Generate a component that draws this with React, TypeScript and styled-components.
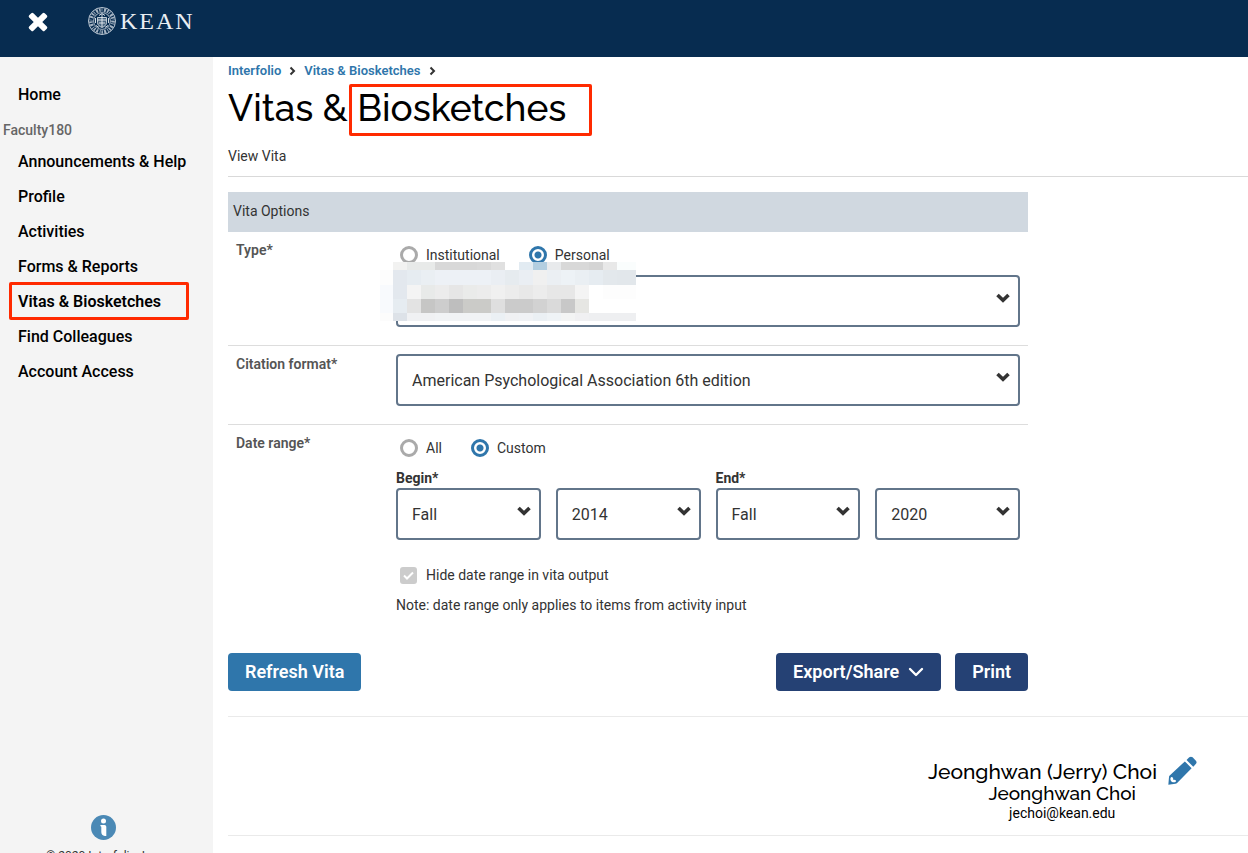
import React from 'react';
import styled, { createGlobalStyle, css } from 'styled-components';

const body = "Roboto, 'Liberation Sans', sans-serif";
const display = "Raleway, Lato, 'Open Sans', sans-serif";

const GlobalStyle = createGlobalStyle`
  *, *::before, *::after { box-sizing: border-box; }
  body {
    margin: 0;
    background: #fff;
    color: #333;
    font: 14px/20px ${body};
    overflow-x: hidden;
  }
  h1, h2, h3, p, ul { margin: 0; padding: 0; font-weight: 400; }
  ul { list-style: none; }
  a { text-decoration: none; }
  fieldset { border: 0; margin: 0; padding: 0; min-width: 0; }
`;

const Shell = styled.div`
  display: flex;
  flex-direction: column;
  height: 100vh;
  overflow: hidden;
`;

const TopBar = styled.header`
  flex: none;
  display: flex;
  align-items: flex-start;
  gap: 40px;
  padding: 6px 28px;
  height: 57px;
  background: #072c50;
  color: #fff;
`;

const IconButton = styled.button`
  display: flex;
  align-self: flex-start;
  padding: 0;
  border: 0;
  background: none;
  color: inherit;
  cursor: pointer;
`;

const CloseButton = styled(IconButton)`
  padding: 6px 0;
`;

const Logo = styled.a`
  display: flex;
  align-items: center;
  gap: 4px;
  color: #e9eef3;
  font: 24px/30px 'Liberation Serif', serif;
  letter-spacing: 2px;
`;

const Body = styled.div`
  flex: 1;
  display: flex;
  min-height: 0;
`;

const Sidebar = styled.nav`
  flex: none;
  width: 213px;
  padding-top: 20px;
  background: #f4f4f4;
  overflow: hidden;
`;

const NavLink = styled.a`
  position: relative;
  display: block;
  padding: 0 18px;
  color: #000;
  font-size: 16px;
  font-weight: 500;
  line-height: 35px;
`;

const marker = css`
  content: '';
  position: absolute;
  border: 3px solid #ff2a00;
  border-radius: 2px;
  pointer-events: none;
`;

const MarkedNavLink = styled(NavLink)`
  font-weight: 600;
  &::after {
    ${marker}
    inset: -2px 24px -1px 9px;
  }
`;

const NavHeading = styled.h2`
  padding: 8px 3px 4px;
  color: #666;
  font-size: 14px;
  font-weight: 500;
  line-height: 20px;
`;

const SideFooter = styled.footer`
  display: flex;
  flex-direction: column;
  align-items: center;
  gap: 8px;
  margin-top: 426px;
  padding-right: 6px;
  color: #333;
  font-size: 12px;
  line-height: 16px;

  button { align-self: center; }
`;

const Main = styled.main`
  flex: 1;
  min-width: 0;
  padding-left: 15px;
  overflow: hidden;
`;

const Crumbs = styled.nav`
  display: flex;
  align-items: center;
  gap: 8px;
  padding-top: 4px;
  color: #333;
  font-size: 13px;
  font-weight: 600;
  a { color: #2f76ab; }
`;

const Title = styled.h1`
  margin-top: 3px;
  color: #000;
  font: 500 37px/48px ${display};
`;

const MarkedWord = styled.span`
  position: relative;
  &::after {
    ${marker}
    inset: -2px -26px -6px -8px;
  }
`;

const Lead = styled.p`
  margin-top: 14px;
  padding-bottom: 10px;
  border-bottom: 1px solid #d9d9d9;
`;

const Form = styled.form`
  max-width: 800px;
  margin: 15px 0 25px;
`;

const FormTitle = styled.h2`
  padding: 9px 5px 11px;
  background: #d0d8e0;
  font-size: 14px;
  line-height: 20px;
`;

const Row = styled.div<{ $last?: boolean }>`
  display: grid;
  grid-template-columns: 152px 1fr;
  gap: 8px;
  padding: 8px 8px ${p => (p.$last ? 38 : 18)}px;
  border-bottom: ${p => (p.$last ? 0 : 1)}px solid #ddd;
`;

const RowLabel = styled.label`
  color: #555;
  font-weight: 600;
`;

const Field = styled.div`
  position: relative;
  min-width: 0;
`;

const Choices = styled.div`
  display: flex;
  gap: 29px;
  padding: 5px 4px 10px;
`;

const Choice = styled.label`
  display: flex;
  align-items: center;
  gap: 8px;
`;

const Radio = styled.input.attrs({ type: 'radio' })`
  appearance: none;
  width: 18px;
  height: 18px;
  margin: 0;
  border: 3px solid #aaa;
  border-radius: 50%;
  &:checked {
    border-color: #2f76ab;
    background: radial-gradient(circle, #2f76ab 3px, #fff 4px);
  }
`;

const SelectBox = styled.div`
  display: grid;
  align-items: center;
  > * { grid-area: 1 / 1; }
`;

const Select = styled.select`
  appearance: none;
  width: 100%;
  height: 52px;
  padding: 2px 32px 0 14px;
  border: 2px solid #62758a;
  border-radius: 4px;
  background: #fff;
  color: #333;
  font: 16px/20px ${body};
`;

const SelectArrow = styled.svg`
  justify-self: end;
  margin: 0 10px 6px 0;
  pointer-events: none;
`;

const DateGrid = styled.div`
  display: grid;
  grid-template-columns: 1fr 1fr;
  gap: 15px;
`;

const DateGroup = styled.fieldset`
  display: grid;
  grid-template-columns: 1fr 1fr;
  column-gap: 15px;
`;

const DateLabel = styled.label`
  grid-column: 1 / -1;
  font-weight: 700;
`;

const CheckLine = styled(Choice)`
  padding: 25px 4px 10px;
  gap: 9px;
`;

const CheckBox = styled.span`
  display: grid;
  > * { grid-area: 1 / 1; }
`;

const Tick = styled.input.attrs({ type: 'checkbox' })`
  appearance: none;
  width: 17px;
  height: 17px;
  margin: 0;
  border-radius: 3px;
  background: #ccc;
`;

const Actions = styled.div`
  display: flex;
  gap: 14px;
`;

const Button = styled.button<{ $primary?: boolean }>`
  display: flex;
  align-items: center;
  gap: 9px;
  height: 38px;
  padding: 0 17px;
  margin-right: ${p => (p.$primary ? 'auto' : 0)};
  border: 0;
  border-radius: 4px;
  background: ${p => (p.$primary ? '#2f76ab' : '#254174')};
  color: #fff;
  font: 600 18px/24px ${body};
  cursor: pointer;
`;

const VitaHeader = styled.section`
  display: flex;
  justify-content: flex-end;
  gap: 11px;
  padding: 39px 51px 11px 0;
  border-top: 1px solid #eaeaea;
  border-bottom: 1px solid #eaeaea;
  color: #000;
`;

const Person = styled.div`
  display: flex;
  flex-direction: column;
  align-items: flex-end;
  padding-top: 4px;
`;

const Name = styled.h2`
  font: 500 21px/24px ${display};
`;

const Details = styled.div`
  display: flex;
  flex-direction: column;
  align-items: center;
  margin-right: 21px;
  line-height: 22px;
`;

const AltName = styled.h3`
  font: 500 19px/18px ${display};
`;

const Mosaic = styled.svg`
  position: absolute;
  top: 22px;
  left: -16px;
`;

const columns = [0, ...Array.from({ length: 17 }, (_, i) => 13 + i * 14), 256];
const rows = [0, 8, 23, 37, 51, 59];
const shades = [
  'fff f2f2f1 e8eae9 e8eae9 d8d8d8 d8d8d8 d8d8d8 dadada e0e0e0 fff e2ebf2 b3cee0 e8eaec d8d8d8 d8d8d8 d4d4d4 e8e8e8 fafdfd',
  'fdfdfd e3e8ee e6ecf1 eaeff3 edf1f6 edf1f6 edf1f6 edf1f6 eaeef3 e6ebef eaeef3 f0f0f0 ebeff3 edf2f6 eaeff3 e6ecf1 e3e8ec e2e7eb',
  'f8fafd e3e8ee f4f4f4 e8eae9 ececec e6e6e6 eaebea ececec f0f0f0 ececec e8e8e8 ececec e7e7e7 e7e7e7 f4f4f4 fff fdfdfd fdfdfd',
  'f8fafd e6ecf1 e3e3e3 c6c6c5 cdcdcd bebebe cbcbc8 cbcbc8 dfdfdf cbcbcb cbcbcb d2d2d2 dadada c8c8c8 e6e6e3 fff fff fff',
  'fcfcfc dde2e8 f0f1f3 f0f1f3 f1f3f5 f1f3f5 f1f3f5 f1f3f5 ebf0f4 f0f1f3 f0f2f5 ebf0f4 eff3f6 f3f4f4 f0f0f2 eeeff1 eeeff1 eeeff1',
].map(line => line.split(' '));

function Redaction() {
  return (
    <Mosaic width="256" height="59" shapeRendering="crispEdges" aria-hidden="true">
      {shades.map((line, r) =>
        line.map((shade, c) => (
          <rect
            key={`${r}-${c}`}
            x={columns[c]}
            y={rows[r]}
            width={columns[c + 1] - columns[c]}
            height={rows[r + 1] - rows[r]}
            fill={`#${shade}`}
          />
        )),
      )}
    </Mosaic>
  );
}

function Seal() {
  return (
    <svg width="28" height="30" viewBox="0 0 28 30" fill="none" stroke="currentColor" aria-hidden="true">
      <circle cx="14" cy="15" r="13.5" strokeWidth=".8" />
      <circle cx="14" cy="15" r="8.400" strokeWidth=".7" />
      <circle cx="14" cy="15" r="11" strokeWidth="3.600" strokeDasharray="1.500 1 .8 1.600 2 1.200" opacity=".7" />
      <path d="M9.500 11.500h9v5c0 2.500-2 4-4.500 5-2.500-1-4.500-2.500-4.500-5z" fill="currentColor" fillOpacity=".3" strokeWidth=".8" />
      <path d="M14 8v13M10 14h8M11 17h6M11 9.500l3-2 3 2M8 19.500l3 2M20 19.500l-3 2M7.500 12v5M20.500 12v5" strokeWidth=".9" />
    </svg>
  );
}

function CrumbArrow() {
  return (
    <svg width="7" height="10" viewBox="0 0 7 10" fill="none" stroke="currentColor" strokeWidth="2" aria-hidden="true">
      <path d="M1.500 1.500 5 5 1.500 8.500" />
    </svg>
  );
}

function Dropdown({ id, label, options }: { id: string; label?: string; options: string[] }) {
  return (
    <SelectBox>
      <Select id={id} aria-label={label}>
        {options.map(option => <option key={option}>{option}</option>)}
      </Select>
      <SelectArrow width="14" height="10" viewBox="0 0 14 10" fill="none" stroke="#333" strokeWidth="3.600" aria-hidden="true">
        <path d="M1.500 2 7 7.200 12.500 2" />
      </SelectArrow>
    </SelectBox>
  );
}

const facultyLinks = [
  'Announcements & Help',
  'Profile',
  'Activities',
  'Forms & Reports',
  'Vitas & Biosketches',
  'Find Colleagues',
  'Account Access',
];

export default function App() {
  return (
    <>
      <GlobalStyle />
      <Shell>
        <TopBar>
          <CloseButton type="button" aria-label="Close menu">
            <svg width="20" height="20" viewBox="0 0 20 20" fill="currentColor" aria-hidden="true">
              <rect x="-1" y="7" width="22" height="6" rx="1.500" transform="rotate(45 10 10)" />
              <rect x="-1" y="7" width="22" height="6" rx="1.500" transform="rotate(-45 10 10)" />
            </svg>
          </CloseButton>
          <Logo href="#home">
            <Seal />
            KEAN
          </Logo>
        </TopBar>
        <Body>
          <Sidebar aria-label="Main">
            <NavLink href="#home">Home</NavLink>
            <NavHeading>Faculty180</NavHeading>
            <ul>
              {facultyLinks.map(text => {
                const Item = text === 'Vitas & Biosketches' ? MarkedNavLink : NavLink;
                return <li key={text}><Item href="#section">{text}</Item></li>;
              })}
            </ul>
            <SideFooter>
              <IconButton type="button" aria-label="Information">
                <svg width="25" height="25" viewBox="0 0 25 25" aria-hidden="true">
                  <circle cx="12.500" cy="12.500" r="12.500" fill="#4b89b5" />
                  <circle cx="12.500" cy="6" r="2.500" fill="#fff" />
                  <path d="M9.300 10h4.200q1.800 0 1.800 1.800V21h-1.500q-3.500-.5-3.500-4v-5.300q-1 0-1-1.700z" fill="#fff" />
                </svg>
              </IconButton>
              <span>© 2020 Interfolio, Inc.</span>
            </SideFooter>
          </Sidebar>
          <Main>
            <Crumbs aria-label="Breadcrumb">
              <a href="#interfolio">Interfolio</a>
              <CrumbArrow />
              <a href="#vitas">Vitas &amp; Biosketches</a>
              <CrumbArrow />
            </Crumbs>
            <Title>Vitas &amp; <MarkedWord>Biosketches</MarkedWord></Title>
            <Lead>View Vita</Lead>
            <Form>
              <FormTitle>Vita Options</FormTitle>
              <Row>
                <RowLabel htmlFor="vita">Type*</RowLabel>
                <Field>
                  <Choices>
                    <Choice><Radio name="type" />Institutional</Choice>
                    <Choice><Radio name="type" defaultChecked />Personal</Choice>
                  </Choices>
                  <Dropdown id="vita" options={['']} />
                  <Redaction />
                </Field>
              </Row>
              <Row>
                <RowLabel htmlFor="citation">Citation format*</RowLabel>
                <Dropdown id="citation" options={['American Psychological Association 6th edition']} />
              </Row>
              <Row $last>
                <RowLabel as="span">Date range*</RowLabel>
                <Field>
                  <Choices>
                    <Choice><Radio name="range" />All</Choice>
                    <Choice><Radio name="range" defaultChecked />Custom</Choice>
                  </Choices>
                  <DateGrid>
                    <DateGroup>
                      <DateLabel htmlFor="begin-term">Begin*</DateLabel>
                      <Dropdown id="begin-term" options={['Fall', 'Spring']} />
                      <Dropdown id="begin-year" label="Begin year" options={['2014', '2015']} />
                    </DateGroup>
                    <DateGroup>
                      <DateLabel htmlFor="end-term">End*</DateLabel>
                      <Dropdown id="end-term" options={['Fall', 'Spring']} />
                      <Dropdown id="end-year" label="End year" options={['2020', '2019']} />
                    </DateGroup>
                  </DateGrid>
                  <CheckLine>
                    <CheckBox>
                      <Tick defaultChecked disabled />
                      <svg width="17" height="17" viewBox="0 0 17 17" fill="none" stroke="#fff" strokeWidth="2" aria-hidden="true">
                        <path d="m4 8.500 3 3L13 5.500" />
                      </svg>
                    </CheckBox>
                    Hide date range in vita output
                  </CheckLine>
                  <p>Note: date range only applies to items from activity input</p>
                </Field>
              </Row>
              <Actions>
                <Button type="button" $primary>Refresh Vita</Button>
                <Button type="button">
                  Export/Share
                  <svg width="16" height="10" viewBox="0 0 16 10" fill="none" stroke="currentColor" strokeWidth="2.400" strokeLinecap="round" strokeLinejoin="round" aria-hidden="true">
                    <path d="m2 2 6 6 6-6" />
                  </svg>
                </Button>
                <Button type="button">Print</Button>
              </Actions>
            </Form>
            <VitaHeader>
              <Person>
                <Name>Jeonghwan (Jerry) Choi</Name>
                <Details>
                  <AltName>Jeonghwan Choi</AltName>
                  <span>jechoi@kean.edu</span>
                </Details>
              </Person>
              <IconButton type="button" aria-label="Edit">
                <svg width="29" height="29" viewBox="0 0 86 86" fill="#2f76ab" aria-hidden="true">
                  <path d="M55 12 63 4q5-4 10 0l9 9q5 5 1 10l-8 9z" />
                  <path d="M50 16 70 36 27 80q-2 2-5 2.500L1 85 3 62q0-2 2-4z" />
                  <path d="M9 63q4-2 6 3 1 4 1 5 5-1 7 1 2 3-1 5-5 2-10 0-4-2-5-8 0-4 2-6z" fill="#fff" />
                </svg>
              </IconButton>
            </VitaHeader>
          </Main>
        </Body>
      </Shell>
    </>
  );
}
